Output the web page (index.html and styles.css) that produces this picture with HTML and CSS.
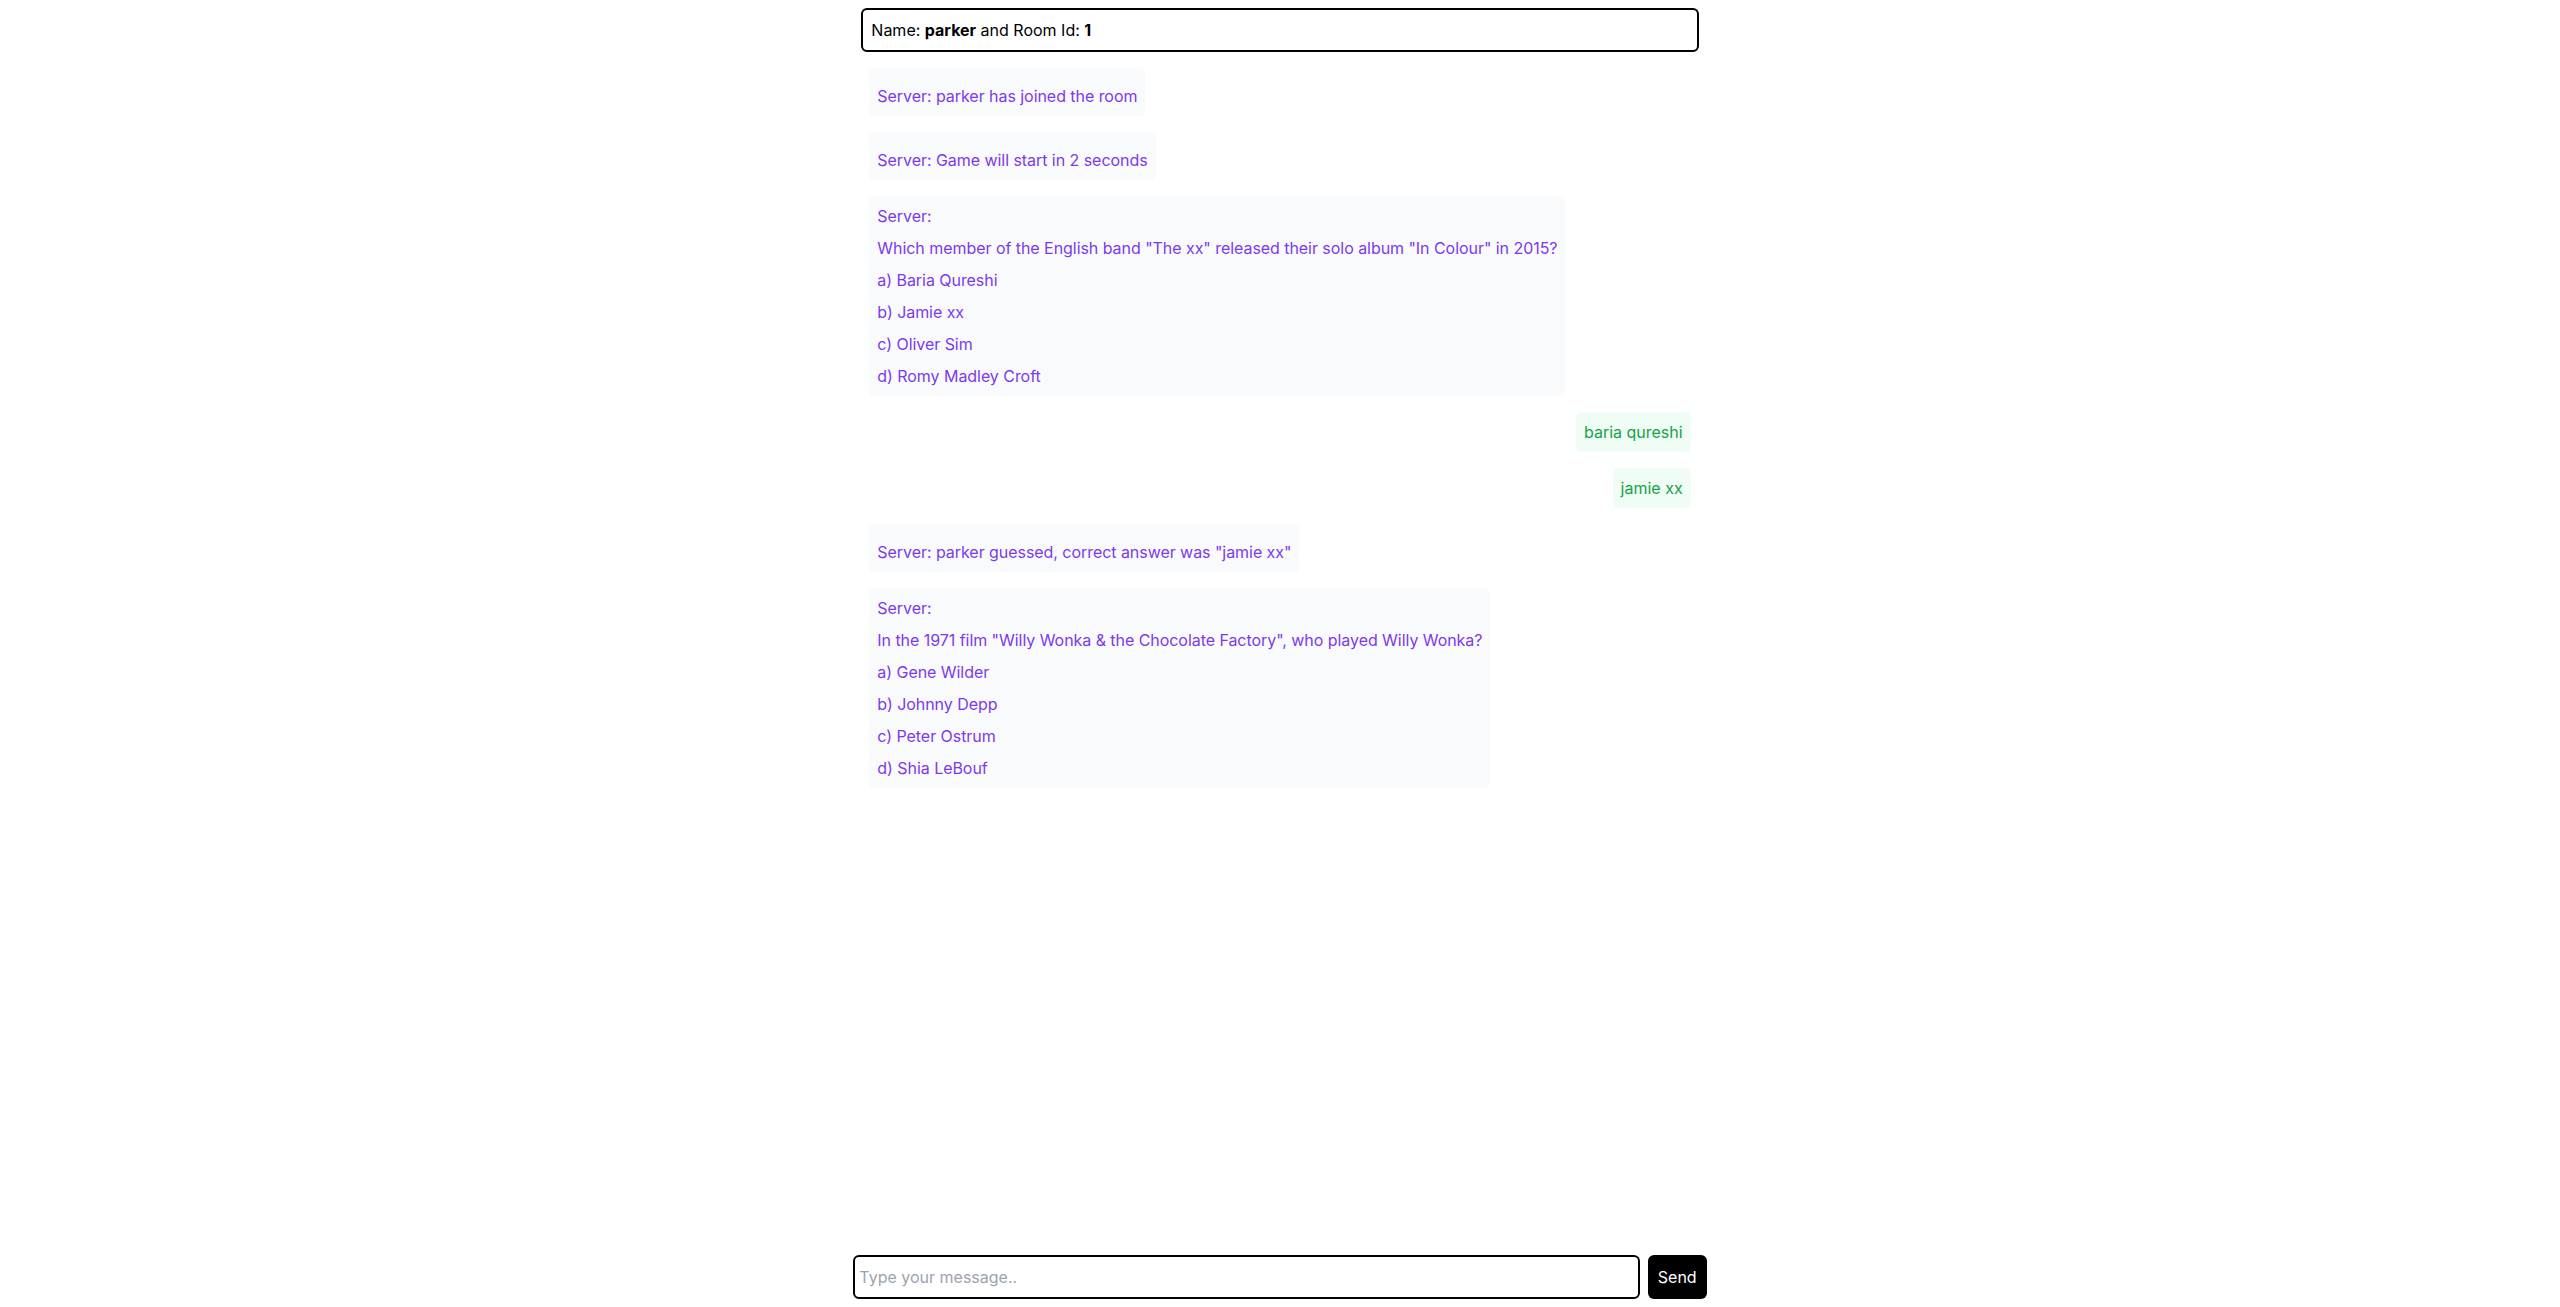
FILE: index.html
```html
<!DOCTYPE html>
<html lang="en">
<head>
<meta charset="utf-8">
<title>Trivia Chat</title>
<link rel="stylesheet" href="styles.css">
</head>
<body>
<div class="app">
  <div class="room-info">Name: <b>parker</b> and Room Id: <b>1</b></div>
  <div class="messages">
    <div class="bubble server single">Server: parker has joined the room</div>
    <div class="bubble server single">Server: Game will start in 2 seconds</div>
    <div class="bubble server multi">
      <p>Server:</p>
      <p>Which member of the English band "The xx" released their solo album "In Colour" in 2015?</p>
      <p>a) Baria Qureshi</p>
      <p>b) Jamie xx</p>
      <p>c) Oliver Sim</p>
      <p>d) Romy Madley Croft</p>
    </div>
    <div class="bubble own">baria qureshi</div>
    <div class="bubble own">jamie xx</div>
    <div class="bubble server single">Server: parker guessed, correct answer was "jamie xx"</div>
    <div class="bubble server multi">
      <p>Server:</p>
      <p>In the 1971 film "Willy Wonka &amp; the Chocolate Factory", who played Willy Wonka?</p>
      <p>a) Gene Wilder</p>
      <p>b) Johnny Depp</p>
      <p>c) Peter Ostrum</p>
      <p>d) Shia LeBouf</p>
    </div>
  </div>
  <form class="composer" onsubmit="return false;">
    <input class="composer-input" type="text" placeholder="Type your message..">
    <button class="send-btn" type="submit">Send</button>
  </form>
</div>
</body>
</html>
```

FILE: styles.css
```css
* {
  box-sizing: border-box;
}

html, body {
  margin: 0;
  padding: 0;
  height: 100%;
  background: #ffffff;
}

body {
  font-family: Inter, "Noto Sans", "Liberation Sans", sans-serif;
  font-size: 16px;
  line-height: 24px;
  color: #000000;
}

.app {
  width: 33.3333%;
  height: 100vh;
  margin: 0 auto;
  padding: 8px 0;
  display: flex;
  flex-direction: column;
}

.room-info {
  margin: 0 8px;
  padding: 8px;
  border: 2px solid #000000;
  border-radius: 6px;
}

.room-info b {
  font-weight: 700;
}

.messages {
  flex: 1;
  padding: 16px;
  display: flex;
  flex-direction: column;
  align-items: flex-start;
  gap: 16px;
  overflow-y: auto;
}

.bubble {
  border-radius: 6px;
  padding: 8px;
}

.bubble.server {
  background: #f9fafb;
  color: #7c3aed;
  letter-spacing: -0.05px;
}

.bubble.single {
  padding-top: 16px;
}

.bubble.multi {
  display: flex;
  flex-direction: column;
  gap: 8px;
}

.bubble.multi p {
  margin: 0;
}

.bubble.own {
  align-self: flex-end;
  background: #f0fdf4;
  color: #16a34a;
}

.composer {
  margin: 0;
  display: flex;
  gap: 8px;
}

.composer-input {
  flex: 1;
  height: 44px;
  border: 2px solid #000000;
  border-radius: 6px;
  padding: 0 4px;
  font-family: inherit;
  font-size: 16px;
  color: #000000;
  outline: none;
}

.composer-input::placeholder {
  color: #9ca3af;
}

.send-btn {
  height: 44px;
  padding: 0 10px;
  border: none;
  border-radius: 6px;
  background: #000000;
  color: #ffffff;
  font-family: inherit;
  font-size: 16px;
}
```
